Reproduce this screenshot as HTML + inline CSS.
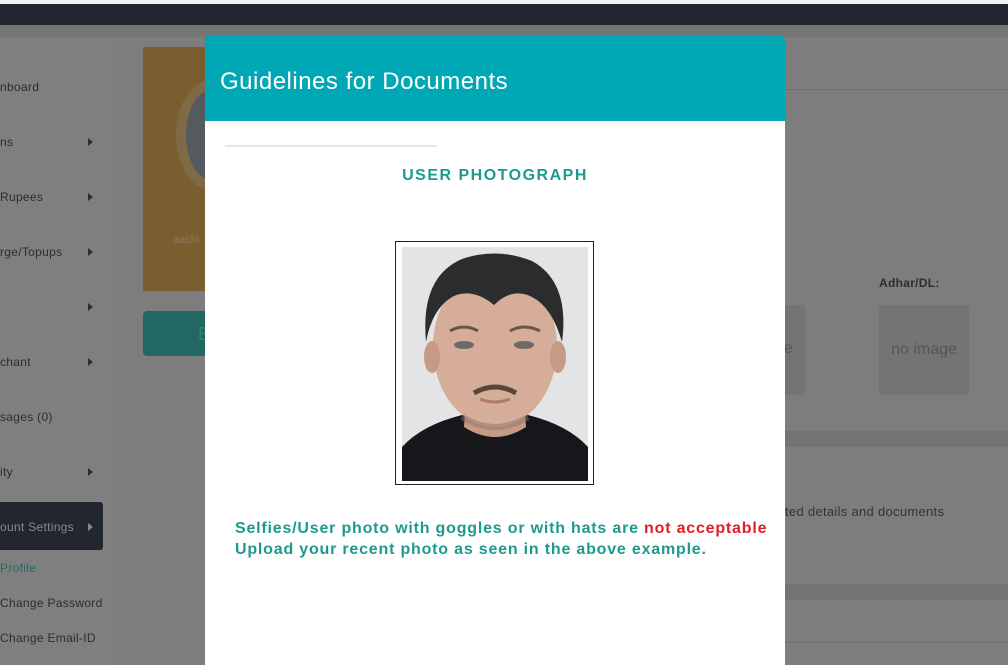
<!DOCTYPE html>
<html><head><meta charset="utf-8"><style>
*{margin:0;padding:0;box-sizing:border-box}
body{width:1008px;height:665px;overflow:hidden;position:relative;background:#7d7d7d;font-family:"Liberation Sans",sans-serif}
.top{position:absolute;left:0;top:0;width:1008px;height:4px;background:#f2f2f2}
.nav{position:absolute;left:0;top:4px;width:1008px;height:21px;background:#22262f}
.strip{position:absolute;left:0;top:25px;width:1008px;height:12px;background:#757575}
.side{position:absolute;left:0;top:37px;width:113px;height:628px;background:#7f7f7f}
.si{position:absolute;left:0;font-size:12px;color:#2d2d2d;letter-spacing:0.3px}
.ar{position:absolute;left:88px;width:0;height:0;border-top:4px solid transparent;border-bottom:4px solid transparent;border-left:5px solid #2d2d2d}
.abs{position:absolute}
.modal{position:absolute;left:205px;top:36px;width:580px;height:629px;background:#fff;border-top-right-radius:4px;overflow:hidden}
.mh{height:85px;background:#00a8b5;color:#fff;font-size:24px;padding:33px 0 0 15px;line-height:26px;letter-spacing:0.5px}
</style></head><body>
<div class="top"></div><div class="nav"></div><div class="strip"></div>
<div class="side">
<div class="si" style="top:43px">nboard</div>
<div class="si" style="top:98px">ns</div><div class="ar" style="top:101px"></div>
<div class="si" style="top:153px">Rupees</div><div class="ar" style="top:156px"></div>
<div class="si" style="top:208px">rge/Topups</div><div class="ar" style="top:211px"></div>
<div class="ar" style="top:266px"></div>
<div class="si" style="top:318px">chant</div><div class="ar" style="top:321px"></div>
<div class="si" style="top:373px">sages (0)</div>
<div class="si" style="top:428px">ity</div><div class="ar" style="top:431px"></div>
<div class="abs" style="left:0;top:465px;width:103px;height:48px;background:#22262f;border-radius:0 3px 3px 0"></div>
<div class="si" style="top:483px;color:#8a8a8a">ount Settings</div><div class="ar" style="top:486px;border-left-color:#8a8a8a"></div>
<div class="si" style="top:524px;color:#1f6b66">Profile</div>
<div class="si" style="top:559px">Change Password</div>
<div class="si" style="top:594px">Change Email-ID</div>
</div>
<div class="abs" style="left:143px;top:47px;width:70px;height:244px;background:#7a5e30"></div>
<div class="abs" style="left:176px;top:80px;width:70px;height:110px;border-radius:50%;border:10px solid #806a45;background:#555a60"></div>
<div class="abs" style="left:173px;top:234px;font-size:11px;color:#8a7a5a">aashi</div>
<div class="abs" style="left:143px;top:311px;width:70px;height:45px;background:#226761;border-radius:4px"></div>
<div class="abs" style="left:198px;top:324px;font-size:18px;color:#2a8580">E</div>
<div class="abs" style="left:785px;top:89px;width:223px;height:1px;background:#6e6e6e"></div>
<div class="abs" style="left:879px;top:276px;font-size:12px;font-weight:bold;color:#2e2e2e;letter-spacing:0.3px">Adhar/DL:</div>
<div class="abs" style="left:785px;top:305px;width:20px;height:90px;background:#747474"></div>
<div class="abs" style="left:784px;top:340px;font-size:16px;color:#555">e</div>
<div class="abs" style="left:879px;top:305px;width:90px;height:90px;background:#747474;color:#555;font-size:16px;text-align:center;line-height:90px">no image</div>
<div class="abs" style="left:785px;top:431px;width:223px;height:16px;background:#747474"></div>
<div class="abs" style="left:785px;top:504px;font-size:13px;color:#333;letter-spacing:0.3px">ted details and documents</div>
<div class="abs" style="left:785px;top:584px;width:223px;height:16px;background:#747474"></div>
<div class="abs" style="left:785px;top:642px;width:223px;height:1px;background:#6e6e6e"></div>
<div class="modal">
<div class="mh">Guidelines for Documents</div>
<div class="abs" style="left:20px;top:109px;width:212px;height:2px;background:#e6e6e6"></div>
<div class="abs" style="left:0;top:131px;width:580px;text-align:center;font-size:16px;font-weight:bold;color:#1e9a8c;letter-spacing:1.5px">USER PHOTOGRAPH</div>
<div class="abs" style="left:190px;top:205px;width:199px;height:244px;border:1px solid #222;background:#fff"></div>
<svg class="abs" style="left:197px;top:211px" width="186" height="234" viewBox="0 0 186 234">
<rect width="186" height="234" fill="#e3e4e6"/>
<path d="M0 200 Q20 178 60 168 L126 168 Q166 178 186 200 L186 234 L0 234Z" fill="#15171a"/>
<path d="M64 150 L122 150 L124 180 Q93 200 62 180Z" fill="#c79a86"/>
<ellipse cx="93" cy="100" rx="62" ry="80" fill="#d5ad98"/>
<ellipse cx="30" cy="110" rx="8" ry="16" fill="#c79a86"/>
<ellipse cx="156" cy="110" rx="8" ry="16" fill="#c79a86"/>
<path d="M24 95 Q18 30 60 12 Q95 0 130 14 Q168 35 160 95 Q150 60 130 50 Q110 40 92 58 Q70 40 50 50 Q30 62 24 95Z" fill="#2b2c2e"/>
<ellipse cx="62" cy="98" rx="10" ry="4" fill="#6d6a68"/>
<ellipse cx="122" cy="98" rx="10" ry="4" fill="#6d6a68"/>
<path d="M48 84 Q62 76 76 84 M108 84 Q122 76 138 84" stroke="#6b5548" stroke-width="3" fill="none"/>
<path d="M72 146 Q93 134 114 146" stroke="#5a463d" stroke-width="5" fill="none"/>
<path d="M78 152 Q93 158 108 152" stroke="#b07a6b" stroke-width="3" fill="none"/>
<path d="M60 170 Q93 190 126 170" stroke="#8d7466" stroke-width="6" fill="none" opacity=".5"/>
</svg>
<div class="abs" style="left:30px;top:482px;width:532px;overflow:hidden;font-size:16px;font-weight:bold;color:#1e9a8c;white-space:nowrap;line-height:21px;letter-spacing:0.8px">Selfies/User photo with goggles or with hats are <span style="color:#e01e26">not acceptable</span><br>Upload your recent photo as seen in the above example.</div>
</div>
</body></html>
